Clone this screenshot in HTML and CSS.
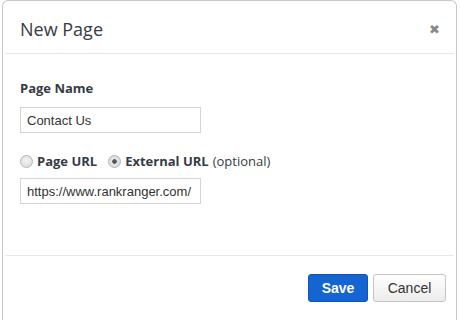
FILE: index.html
```html
<!DOCTYPE html>
<html lang="en">
<head>
    <meta charset="UTF-8">
    <title>New Page</title>
    <link rel="stylesheet" href="styles.css">
</head>
<body>
    <div class="modal">
        <div class="modal-header">
            <h3 class="modal-title">New Page</h3>
            <button class="close" type="button">&#10006;</button>
        </div>
        <div class="modal-body">
            <label class="field-label" for="pageName">Page Name</label>
            <input id="pageName" class="text-input" type="text" value="Contact Us">
            <div class="radio-row">
                <label class="radio-option"><input type="radio" name="urlType"> <b>Page URL</b></label>
                <label class="radio-option"><input type="radio" name="urlType" checked> <b>External URL</b> <span class="muted">(optional)</span></label>
            </div>
            <input class="text-input" type="text" value="https://www.rankranger.com/">
        </div>
        <div class="modal-footer">
            <button class="btn btn-primary" type="button">Save</button>
            <button class="btn btn-default" type="button">Cancel</button>
        </div>
    </div>
</body>
</html>
```

FILE: styles.css
```css
body {
    margin: 0;
    background-color: #fff;
    font-family: "Open Sans", "Liberation Sans", sans-serif;
    color: #333;
}
.modal {
    margin-left: 2px;
    width: 455px;
    height: 320px;
    box-sizing: border-box;
    border: 1px solid #c8c8c8;
    border-bottom: none;
    border-radius: 6px 6px 0 0;
    background-color: #fff;
    display: flex;
    flex-direction: column;
}
.modal-header {
    height: 53px;
    flex-shrink: 0;
    margin: 0 2px;
    padding: 0 14px 0 15px;
    border-bottom: 1px solid #e8e8e8;
    display: flex;
    align-items: center;
    justify-content: space-between;
    box-sizing: border-box;
}
.modal-title {
    margin: 0;
    font-size: 18px;
    font-weight: 400;
    color: #363b44;
    padding-top: 4px;
}
.close {
    border: none;
    background: transparent;
    color: #888;
    font-size: 13px;
    padding: 0;
    cursor: pointer;
    margin-top: 4px;
}
.modal-body {
    height: 202px;
    flex-shrink: 0;
    padding: 25px 15px 0;
    box-sizing: border-box;
    border-bottom: 1px solid #e8e8e8;
    margin: 0 2px;
}
.field-label {
    display: block;
    font-size: 13px;
    font-weight: 700;
    color: #363b44;
    margin-bottom: 10px;
}
.text-input {
    display: block;
    width: 181px;
    height: 26px;
    box-sizing: border-box;
    border: 1px solid #d4d4d4;
    padding: 0 6px;
    font-family: "Liberation Sans", Arial, sans-serif;
    font-size: 13px;
    color: #333;
    margin: 0;
}
.radio-row {
    display: flex;
    gap: 11px;
    margin: 19px 0 8px;
    font-size: 13px;
    color: #363b44;
}
.radio-option {
    display: flex;
    align-items: center;
    gap: 2px;
}
.radio-option input {
    appearance: none;
    margin: 0 2px 0 0;
    width: 13px;
    height: 13px;
    border: 1px solid #b4b4b4;
    border-radius: 50%;
    background: radial-gradient(circle at 50% 40%, #f4f4f4, #d8d8d8);
    box-sizing: border-box;
}
.radio-option input:checked {
    background: radial-gradient(circle, #555 0 2px, #e6e6e6 2.5px, #d4d4d4);
}
.muted {
    font-weight: 400;
    margin-left: 2px;
}
.modal-footer {
    display: flex;
    justify-content: flex-end;
    gap: 5px;
    padding: 18px 10px 0 0;
}
.btn {
    height: 28px;
    border-radius: 3px;
    font-family: "Liberation Sans", Arial, sans-serif;
    font-size: 14px;
    cursor: pointer;
}
.btn-primary {
    width: 60px;
    background-color: #1464d2;
    border: 1px solid #1055b8;
    color: #fff;
    font-weight: 700;
}
.btn-default {
    width: 73px;
    background: linear-gradient(#fff, #ececec);
    border: 1px solid #c4c4c4;
    color: #333;
}
```
